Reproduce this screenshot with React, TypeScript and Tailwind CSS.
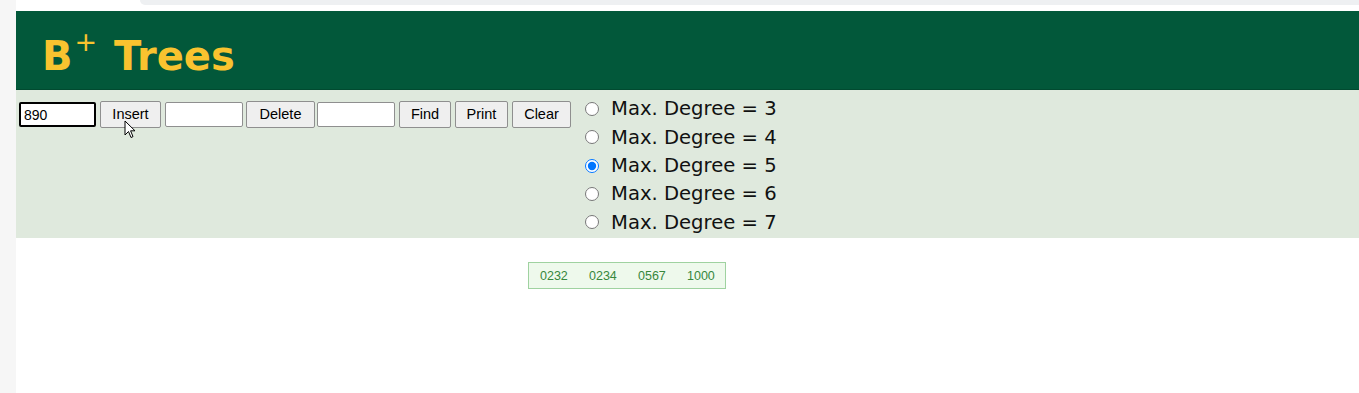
import { useState } from "react";

const degrees = [3, 4, 5, 6, 7];
const keys = ["0232", "0234", "0567", "1000"];

const Btn = ({ label, w }: { label: string; w: string }) => (
  <button
    className={`${w} h-[27px] shrink-0 bg-[#efefef] border border-[#8f8f8f] rounded-[2px] text-[14.5px] text-black font-['Liberation_Sans',Arial,sans-serif] leading-none`}
  >
    {label}
  </button>
);

const Cursor = () => (
  <svg
    className="absolute left-[124px] top-[120px] pointer-events-none"
    width="12"
    height="19"
    viewBox="0 0 12 19"
  >
    <path
      d="M1 1 L1 15 L4.5 11.5 L7 17.5 L9 16.6 L6.6 10.8 L11 10.8 Z"
      fill="#fff"
      stroke="#000"
      strokeWidth="1"
      strokeLinejoin="round"
    />
  </svg>
);

const App = () => {
  const [degree, setDegree] = useState(5);

  return (
    <div className="relative flex w-[1359px] h-[393px] overflow-hidden bg-white">
      <div className="w-[16px] shrink-0 bg-[#f6f6f6]" />
      <div className="flex-1 flex flex-col">
        <div className="h-[11px] bg-white">
          <div className="ml-[124px] h-[5px] bg-[#eef0f2] rounded-bl-[10px]" />
        </div>

        <header className="h-[79px] bg-[#02583a] border-b border-[#014a30] pl-[26px] pt-[25px]">
          <h1 className="text-[40px] leading-none font-bold text-[#f9c32f] font-['DejaVu_Sans',Verdana,sans-serif]">
            B
            <sup className="text-[27px] font-medium -top-[19px] ml-[2px] mr-[3px]">+</sup> Trees
          </h1>
        </header>

        <section className="flex items-start bg-[#dfe9dd] pl-[3px] pb-[2px]">
          <div className="flex items-center mt-[11px]">
            <input
              defaultValue="890"
              className="w-[77px] h-[25px] px-[3px] bg-white border-2 border-black rounded-[2px] text-[14px] font-['Liberation_Sans',Arial,sans-serif] outline-none"
            />
            <div className="ml-[4px]">
              <Btn label="Insert" w="w-[61px]" />
            </div>
            <input className="ml-[4px] w-[78px] h-[25px] bg-white border border-[#8f8f8f] rounded-[2px]" />
            <div className="ml-[3px]">
              <Btn label="Delete" w="w-[69px]" />
            </div>
            <input className="ml-[2px] w-[78px] h-[25px] bg-white border border-[#8f8f8f] rounded-[2px]" />
            <div className="ml-[4px] flex gap-[4px]">
              <Btn label="Find" w="w-[52px]" />
              <Btn label="Print" w="w-[53px]" />
              <Btn label="Clear" w="w-[59px]" />
            </div>
          </div>

          <div className="ml-[14px] pt-[5px] flex flex-col">
            {degrees.map((d) => (
              <label
                key={d}
                className="flex items-center h-[28.3px] text-[19.6px] text-[#111] font-['DejaVu_Sans',Verdana,sans-serif]"
              >
                <input
                  type="radio"
                  name="degree"
                  checked={degree === d}
                  onChange={() => setDegree(d)}
                  className="m-0 w-[14px] h-[14px] mr-[12px] accent-[#0075ff]"
                />
                Max. Degree = {d}
              </label>
            ))}
          </div>
        </section>

        <div className="flex-1 pt-[24px] pl-[512px]">
          <div className="flex w-[198px] h-[27px] items-center pl-[11px] bg-[#eef9ec] border border-[#9fd2a0] text-[12.5px] text-[#37873c] font-['Liberation_Sans',Arial,sans-serif]">
            {keys.map((k) => (
              <span key={k} className="w-[49px] shrink-0">
                {k}
              </span>
            ))}
          </div>
        </div>
      </div>
      <Cursor />
    </div>
  );
};

export default App;
